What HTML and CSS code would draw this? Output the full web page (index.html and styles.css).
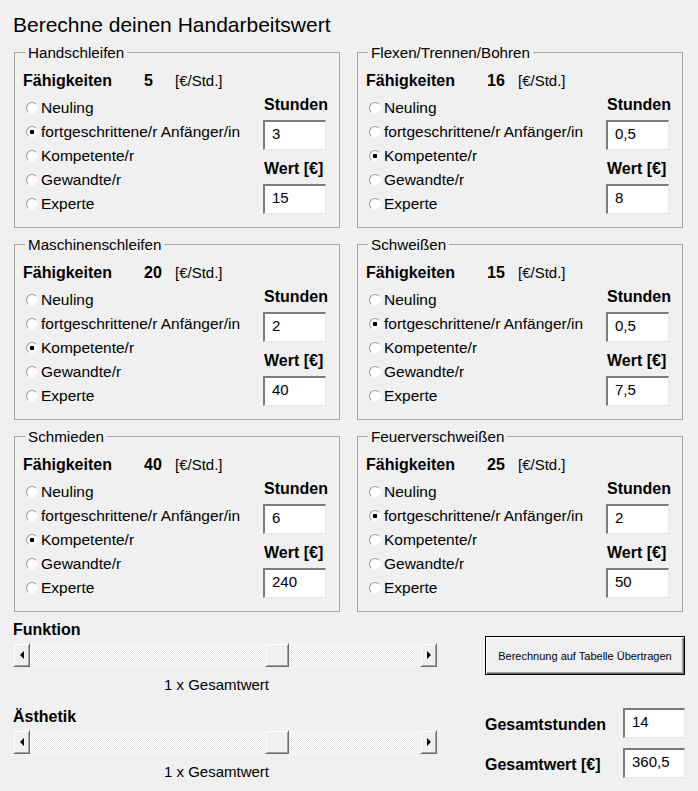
FILE: index.html
```html
<!DOCTYPE html>
<html lang="de">
<head>
  <meta charset="UTF-8" />
  <title>Berechne deinen Handarbeitswert</title>
  <link rel="stylesheet" href="styles.css">
</head>
<body>
  <div class="window">
    <h1 class="title">Berechne deinen Handarbeitswert</h1>

    <div class="groups" id="groups"></div>

    <div class="controls">
      <div class="sliders">
        <div class="slider-title">Funktion</div>
        <div class="scrollbar">
          <span class="sb-btn"><span class="arrow-left"></span></span>
          <span class="sb-track"><span class="sb-thumb"></span></span>
          <span class="sb-btn"><span class="arrow-right"></span></span>
        </div>
        <div class="caption">1 x Gesamtwert</div>

        <div class="slider-title second">Ästhetik</div>
        <div class="scrollbar">
          <span class="sb-btn"><span class="arrow-left"></span></span>
          <span class="sb-track"><span class="sb-thumb"></span></span>
          <span class="sb-btn"><span class="arrow-right"></span></span>
        </div>
        <div class="caption">1 x Gesamtwert</div>
      </div>

      <div class="actions">
        <button class="transfer">Berechnung auf Tabelle Übertragen</button>
        <div class="total first">
          <span class="total-label">Gesamtstunden</span>
          <input class="field small" type="text" value="14">
        </div>
        <div class="total">
          <span class="total-label">Gesamtwert [€]</span>
          <input class="field small" type="text" value="360,5">
        </div>
      </div>
    </div>
  </div>

<script>
const levels = ["Neuling", "fortgeschrittene/r Anfänger/in", "Kompetente/r", "Gewandte/r", "Experte"];

// name, rate, selected level, hours, value
const groups = [
  ["Handschleifen", 5, 1, "3", "15"],
  ["Flexen/Trennen/Bohren", 16, 2, "0,5", "8"],
  ["Maschinenschleifen", 20, 2, "2", "40"],
  ["Schweißen", 15, 1, "0,5", "7,5"],
  ["Schmieden", 40, 2, "6", "240"],
  ["Feuerverschweißen", 25, 1, "2", "50"]
];

let html = "";
groups.forEach(([name, rate, sel, hours, value], g) => {
  const radios = levels.map((lvl, i) =>
    `<label class="level"><input type="radio" name="g${g}"${i === sel ? " checked" : ""}>${lvl}</label>`
  ).join("");
  html += `
    <fieldset class="group">
      <legend>${name}</legend>
      <div class="rate">
        <span class="rate-label">Fähigkeiten</span>
        <span class="rate-value">${rate}</span>
        <span class="rate-unit">[€/Std.]</span>
      </div>
      <div class="group-body">
        <div class="levels">${radios}</div>
        <div class="entry">
          <div class="entry-label">Stunden</div>
          <input class="field" type="text" value="${hours}">
          <div class="entry-label lower">Wert [€]</div>
          <input class="field lower" type="text" value="${value}">
        </div>
      </div>
    </fieldset>`;
});
document.getElementById("groups").innerHTML = html;
</script>
</body>
</html>
```

FILE: styles.css
```css
body {
  margin: 0;
  background: #f0f0f0;
  font-family: "Liberation Sans", Arial, sans-serif;
  color: #000;
}
.window {
  width: 698px;
  height: 791px;
  overflow: hidden;
}
.title {
  margin: 13px 0 0 13px;
  font-size: 21px;
  font-weight: normal;
  line-height: 24px;
}
.groups {
  display: grid;
  grid-template-columns: 326px 326px;
  column-gap: 17px;
  row-gap: 8px;
  margin: 7px 0 0 14px;
}
.group {
  margin: 0;
  padding: 0 13px 11px 8px;
  border: 1px solid #a5a5a5;
  min-width: 0;
}
.group legend {
  margin-left: 2px;
  padding: 0 3px;
  font-size: 15.2px;
  line-height: 17px;
}
.rate {
  display: flex;
  margin-top: 11px;
  font-size: 16px;
  line-height: 18px;
}
.rate-label {
  width: 121px;
  font-weight: bold;
}
.rate-value {
  width: 31px;
  font-weight: bold;
}
.rate-unit {
  font-size: 15px;
}
.group-body {
  display: flex;
  justify-content: space-between;
}
.levels {
  margin-top: 6px;
}
.level {
  display: flex;
  align-items: center;
  height: 24px;
  font-size: 15.5px;
}
.level input {
  appearance: none;
  -webkit-appearance: none;
  box-sizing: border-box;
  width: 12px;
  height: 12px;
  margin: 0 3px 0 3px;
  border-radius: 50%;
  border: 1px solid;
  border-color: #9a9a9a #f6f6f6 #f6f6f6 #9a9a9a;
  background: #fff;
}
.level input:checked {
  background: radial-gradient(circle, #000 0 2px, #fff 2.6px);
}
.entry {
  width: 63px;
  margin-top: 6px;
}
.entry-label {
  padding-left: 1px;
  font-size: 16px;
  font-weight: bold;
  line-height: 18px;
}
.entry-label.lower {
  margin-top: 10px;
}
.field {
  display: block;
  box-sizing: border-box;
  width: 63px;
  height: 30px;
  margin: 6px 0 0 0;
  padding: 0 0 5px 7px;
  border-style: solid;
  border-width: 2px 1px 1px 2px;
  border-color: #7d7d7d #e6e6e6 #e6e6e6 #7d7d7d;
  background: #fff;
  font-family: "Liberation Sans", Arial, sans-serif;
  font-size: 15px;
  color: #000;
  outline: none;
}
.field.lower {
  margin-top: 6px;
}
.field.small {
  width: 62px;
  margin: 0;
}

.controls {
  display: flex;
  margin: 9px 0 0 13px;
}
.sliders {
  width: 424px;
}
.slider-title {
  font-size: 16px;
  font-weight: bold;
  line-height: 18px;
}
.slider-title.second {
  margin-top: 14px;
}
.scrollbar {
  display: flex;
  height: 24px;
  margin-top: 4px;
}
.sb-btn,
.sb-thumb {
  display: flex;
  align-items: center;
  justify-content: center;
  box-sizing: border-box;
  height: 24px;
  background: #f0f0f0;
  border: 1px solid;
  border-color: #f0f0f0 #6d6d6d #6d6d6d #f0f0f0;
  box-shadow: inset 1px 1px #fff, inset -1px -1px #a0a0a0;
}
.sb-btn {
  width: 17px;
}
.sb-track {
  flex: 1;
  background: repeating-conic-gradient(#fff 0 25%, #e9e9e9 0 50%) 0 0 / 2px 2px;
}
.sb-thumb {
  width: 24px;
  margin-left: 235px;
}
.arrow-left {
  border-top: 4px solid transparent;
  border-bottom: 4px solid transparent;
  border-right: 4px solid #000;
}
.arrow-right {
  border-top: 4px solid transparent;
  border-bottom: 4px solid transparent;
  border-left: 4px solid #000;
}
.caption {
  margin-top: 9px;
  padding-right: 17px;
  text-align: center;
  font-size: 15px;
  line-height: 18px;
}

.actions {
  width: 200px;
  margin-left: 48px;
}
.transfer {
  display: block;
  width: 200px;
  height: 39px;
  margin-top: 15px;
  padding: 0;
  background: #f0f0f0;
  border: 1px solid #000;
  box-shadow: inset 1px 1px #fff, inset -1px -1px #696969, inset -2px -2px #a0a0a0;
  font-family: "Liberation Sans", Arial, sans-serif;
  font-size: 11px;
  color: #000;
}
.total {
  display: flex;
  justify-content: space-between;
  align-items: flex-end;
  margin-top: 10px;
}
.total.first {
  margin-top: 33px;
}
.total-label {
  margin-bottom: 4px;
  font-size: 16px;
  font-weight: bold;
  line-height: 18px;
}
```
